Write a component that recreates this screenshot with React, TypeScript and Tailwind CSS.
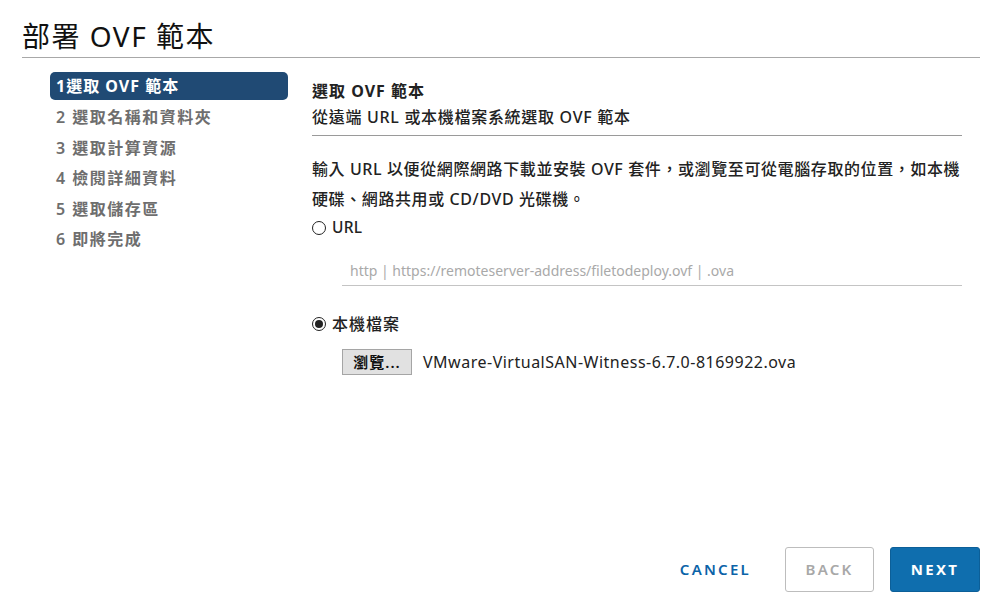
import React from "react";

const steps = [
  "2 選取名稱和資料夾",
  "3 選取計算資源",
  "4 檢閱詳細資料",
  "5 選取儲存區",
  "6 即將完成",
];

const font = { fontFamily: '"Noto Sans", "Noto Sans CJK TC", sans-serif' };

const Radio = ({ checked }: { checked?: boolean }) => (
  <span className="w-[14px] h-[14px] rounded-full border-[1.5px] border-[#222] flex items-center justify-center">
    {checked && <span className="w-[8px] h-[8px] rounded-full bg-[#222]" />}
  </span>
);

export default function App() {
  return (
    <div className="h-[607px] w-[1000px] bg-white flex flex-col text-[#222]" style={font}>
      <div className="mx-[22px] mr-[20px] pt-[18px] pb-[3px] border-b border-[#a8a8a8]">
        <h1 className="text-[28px] leading-[36px] font-normal tracking-[1.5px] text-[#111]">部署 OVF 範本</h1>
      </div>

      <div className="flex flex-1">
        {/* sidebar */}
        <div className="w-[238px] ml-[50px] mt-[14px] shrink-0">
          <div className="h-[28px] rounded-[5px] bg-[#204a74] text-white font-bold text-[16px] tracking-[1px] flex items-center px-[6px]">
            1選取 OVF 範本
          </div>
          <div className="mt-[2px]">
            {steps.map((s) => (
              <div key={s} className="h-[30.5px] flex items-center px-[6px] text-[16px] tracking-[1.5px] font-semibold text-[#6e6e6e]">
                {s}
              </div>
            ))}
          </div>
        </div>

        {/* content */}
        <div className="ml-[24px] w-[650px] flex flex-col">
          <div className="mt-[20px] pb-[5px] border-b border-[#9a9a9a]">
            <div className="h-[26px] flex items-center text-[16px] tracking-[1px] font-bold">選取 OVF 範本</div>
            <div className="h-[26px] flex items-center text-[16px] tracking-[0.7px] font-medium">從遠端 URL 或本機檔案系統選取 OVF 範本</div>
          </div>

          <p className="mt-[18px] text-[16px] tracking-[0.6px] leading-[30px] font-medium whitespace-nowrap">
            輸入 URL 以便從網際網路下載並安裝 OVF 套件，或瀏覽至可從電腦存取的位置，如本機
            <br />
            硬碟、網路共用或 CD/DVD 光碟機。
          </p>

          <label className="h-[28px] flex items-center gap-[6px] text-[15.5px] font-medium tracking-[0.3px]">
            <Radio />
            URL
          </label>

          <div className="ml-[30px] mt-[14px] h-[30px] border-b border-[#c4c4c4] flex items-center px-[8px] text-[14px] text-[#a9a9a9]">
            http | https://remoteserver-address/filetodeploy.ovf | .ova
          </div>

          <label className="mt-[24px] h-[28px] flex items-center gap-[6px] text-[16px] tracking-[1px] font-medium">
            <Radio checked />
            本機檔案
          </label>

          <div className="ml-[30px] mt-[11px] flex items-center gap-[11px]">
            <button className="h-[26px] w-[70px] bg-[#e1e1e1] border border-[#a5a5a5] text-[15px] tracking-[1px] font-semibold text-[#111]">
              瀏覽...
            </button>
            <span className="text-[16px] tracking-[0.5px] text-[#222]">VMware-VirtualSAN-Witness-6.7.0-8169922.ova</span>
          </div>
        </div>
      </div>

      <div className="flex justify-end items-center pr-[20px] pb-[15px] gap-[16px]">
        <button className="h-[45px] px-[10px] mr-[8px] text-[15px] font-semibold tracking-[0.15em] text-[#0b63a8]">
          CANCEL
        </button>
        <button className="h-[45px] w-[89px] rounded-[3px] border border-[#bdbdbd] text-[15px] font-semibold tracking-[0.15em] text-[#a8a8a8]">
          BACK
        </button>
        <button className="h-[45px] w-[90px] rounded-[3px] bg-[#0f6eae] border border-[#0c5f98] text-[15px] font-bold tracking-[0.15em] text-white">
          NEXT
        </button>
      </div>
    </div>
  );
}
